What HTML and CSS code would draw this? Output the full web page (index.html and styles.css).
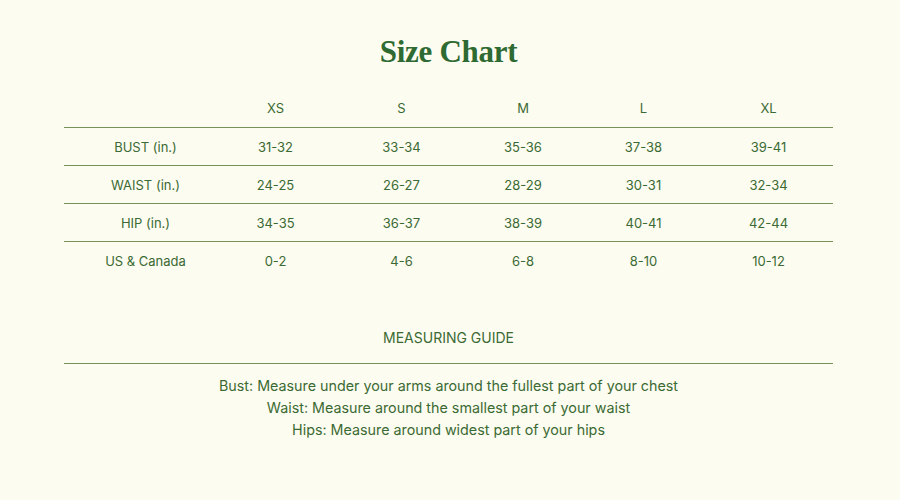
FILE: index.html
```html
<!DOCTYPE html>
<html>
<head>
<meta charset="utf-8">
<link rel="stylesheet" href="styles.css">
</head>
<body>
<div class="page">
  <h1 class="title">Size Chart</h1>
  <div class="chart">
    <div class="row head">
      <div class="cell label"></div>
      <div class="cell">XS</div>
      <div class="cell">S</div>
      <div class="cell">M</div>
      <div class="cell">L</div>
      <div class="cell">XL</div>
    </div>
    <div class="row">
      <div class="cell label">BUST (in.)</div>
      <div class="cell">31-32</div>
      <div class="cell">33-34</div>
      <div class="cell">35-36</div>
      <div class="cell">37-38</div>
      <div class="cell">39-41</div>
    </div>
    <div class="row">
      <div class="cell label">WAIST (in.)</div>
      <div class="cell">24-25</div>
      <div class="cell">26-27</div>
      <div class="cell">28-29</div>
      <div class="cell">30-31</div>
      <div class="cell">32-34</div>
    </div>
    <div class="row">
      <div class="cell label">HIP (in.)</div>
      <div class="cell">34-35</div>
      <div class="cell">36-37</div>
      <div class="cell">38-39</div>
      <div class="cell">40-41</div>
      <div class="cell">42-44</div>
    </div>
    <div class="row last">
      <div class="cell label">US &amp; Canada</div>
      <div class="cell">0-2</div>
      <div class="cell">4-6</div>
      <div class="cell">6-8</div>
      <div class="cell">8-10</div>
      <div class="cell">10-12</div>
    </div>
  </div>
  <div class="guide">
    <div class="guide-title">MEASURING GUIDE</div>
    <div class="guide-text">
      <p>Bust: Measure under your arms around the fullest part of your chest</p>
      <p>Waist: Measure around the smallest part of your waist</p>
      <p>Hips: Measure around widest part of your hips</p>
    </div>
  </div>
</div>
</body>
</html>
```

FILE: styles.css
```css
html, body {
  margin: 0;
  padding: 0;
  background: #fdfcf0;
}
body {
  width: 900px;
  height: 500px;
  overflow: hidden;
  font-family: "Inter", "Lato", sans-serif;
  color: #3b6a34;
}
.page {
  padding: 34px 64px 0 64px;
  width: 769px;
}
.title {
  margin: 0;
  text-align: center;
  font-family: "Liberation Serif", serif;
  font-weight: bold;
  font-size: 31px;
  line-height: 36px;
  color: #2f6a32;
  letter-spacing: -0.3px;
}
.chart {
  margin-top: 18px;
}
.row {
  display: grid;
  grid-template-columns: 147px 129px 123px 120px 121px 129px;
  height: 37px;
  align-items: center;
  border-bottom: 1px solid #76925a;
  font-size: 13px;
}
.row.head {
  height: 39px;
}
.row.last {
  border-bottom: none;
}
.cell {
  text-align: center;
}
.cell.label {
  padding-left: 16px;
}
.guide {
  margin-top: 50px;
}
.guide-title {
  text-align: center;
  font-size: 14px;
  padding-bottom: 17px;
  border-bottom: 1px solid #76925a;
}
.guide-text {
  padding-top: 11px;
  text-align: center;
  font-size: 14.3px;
  line-height: 22px;
}
.guide-text p {
  margin: 0;
}
```
